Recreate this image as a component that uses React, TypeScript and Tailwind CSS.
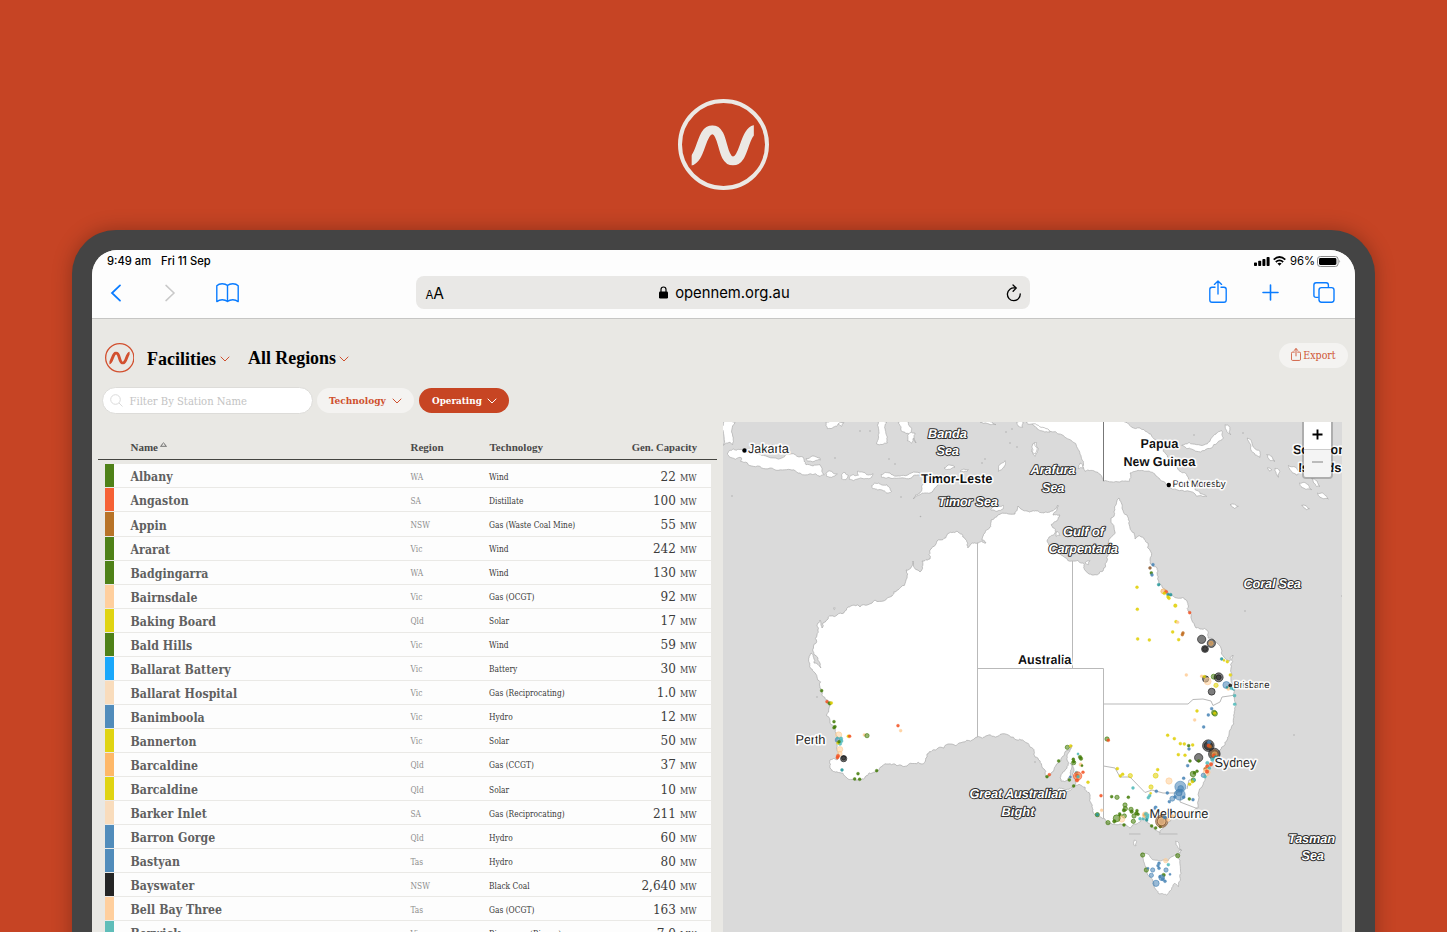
import React from "react";

const SERIF = "font-['DejaVu_Serif_Condensed','DejaVu_Serif',serif]";
const DISPLAY = "font-['Liberation_Serif',serif]";

const COLORS: Record<string, string> = {
  W: "#417a05",
  Y: "#dfcf00",
  B: "#4582b4",
  T: "#1f9497",
  C: "#4cb9b9",
  O: "#f35020",
  P: "#ffcd96",
  G: "#f2aa55",
  K: "#121212",
  N: "#8b572a",
  R: "#c06a1c",
};

type Row = [string, string, string, string, string];

const rows: Row[] = [
  ["Albany", "WA", "Wind", "22", "#4f8118"],
  ["Angaston", "SA", "Distillate", "100", "#f66135"],
  ["Appin", "NSW", "Gas (Waste Coal Mine)", "55", "#b87328"],
  ["Ararat", "Vic", "Wind", "242", "#4f8118"],
  ["Badgingarra", "WA", "Wind", "130", "#4f8118"],
  ["Bairnsdale", "Vic", "Gas (OCGT)", "92", "#ffcf9e"],
  ["Baking Board", "Qld", "Solar", "17", "#e0d413"],
  ["Bald Hills", "Vic", "Wind", "59", "#4f8118"],
  ["Ballarat Battery", "Vic", "Battery", "30", "#1aa8fb"],
  ["Ballarat Hospital", "Vic", "Gas (Reciprocating)", "1.0", "#f9dcbc"],
  ["Banimboola", "Vic", "Hydro", "12", "#518cbb"],
  ["Bannerton", "Vic", "Solar", "50", "#e0d413"],
  ["Barcaldine", "Qld", "Gas (CCGT)", "37", "#feb868"],
  ["Barcaldine", "Qld", "Solar", "10", "#e0d413"],
  ["Barker Inlet", "SA", "Gas (Reciprocating)", "211", "#f9dcbc"],
  ["Barron Gorge", "Qld", "Hydro", "60", "#518cbb"],
  ["Bastyan", "Tas", "Hydro", "80", "#518cbb"],
  ["Bayswater", "NSW", "Black Coal", "2,640", "#252525"],
  ["Bell Bay Three", "Tas", "Gas (OCGT)", "163", "#ffcf9e"],
  ["Berwick", "Vic", "Bioenergy (Biogas)", "7.0", "#5fbdb9"],
];

function Logo({ className }: { className: string }) {
  const clip = React.useId();
  return (
    <svg className={className} viewBox="54 41 273 273" fill="none" stroke="currentColor">
      <clipPath id={clip}>
        <rect x="95" y="120" width="186.5" height="120.5" />
      </clipPath>
      <circle cx="190.5" cy="177.5" r="130.5" strokeWidth="12" />
      <path
        d="M82 230 C128 228 119 133 157 133 C194 133 182 227 219 227 C257 227 248 132 294 130"
        strokeWidth="27"
        clipPath={`url(#${clip})`}
      />
    </svg>
  );
}

function Chevron({ className }: { className: string }) {
  return (
    <svg className={className} viewBox="0 0 10 6" fill="none" stroke="currentColor" strokeWidth="1" strokeLinecap="round">
      <path d="M1 1 L5 5 L9 1" />
    </svg>
  );
}

function ShareIcon({ className, width = 1.5 }: { className: string; width?: number }) {
  return (
    <svg className={className} viewBox="0 0 18 23" fill="none" stroke="currentColor" strokeWidth={width} strokeLinecap="round" strokeLinejoin="round">
      <path d="M6 7.2 H3 Q.8 7.2 .8 9.4 V20 Q.8 22.2 3 22.2 H15 Q17.2 22.2 17.2 20 V9.4 Q17.2 7.2 15 7.2 H12 M9 14 V1 M5.4 4.4 L9 .9 L12.6 4.4" />
    </svg>
  );
}

function StatusBar() {
  return (
    <div className="flex h-[22px] items-center justify-between pl-[15px] pr-[14px] font-['Inter',sans-serif] text-[11.2px] font-medium text-black">
      <div className="flex gap-[10px]">
        <span>9:49 am</span>
        <span>Fri 11 Sep</span>
      </div>
      <div className="flex items-center">
        <svg className="h-[9px] w-[16px]" viewBox="0 0 16 10" preserveAspectRatio="none">
          <rect x="0" y="6" width="3" height="4" rx=".8" />
          <rect x="4.2" y="4.3" width="3" height="5.7" rx=".8" />
          <rect x="8.4" y="2.3" width="3" height="7.7" rx=".8" />
          <rect x="12.6" y="0" width="3" height="10" rx=".8" />
        </svg>
        <svg className="ml-[3px] h-[10px] w-[13px]" viewBox="0 0 13 10" fill="none" stroke="black" strokeWidth="1.7">
          <path d="M.7 3.7 Q6.5 -1.7 12.3 3.7 M2.8 6 Q6.5 2.7 10.2 6" />
          <path d="M4.4 7.5 Q6.5 5.8 8.6 7.5 L6.5 9.7Z" fill="black" stroke="none" />
        </svg>
        <span className="ml-[4px] pt-px text-[11.3px] font-normal">96%</span>
        <svg className="ml-[2px] h-[11px] w-[24px]" viewBox="0 0 24 11">
          <rect x=".5" y=".5" width="20.6" height="10" rx="2.8" fill="none" stroke="#8c8c8c" />
          <rect x="2" y="2" width="17.4" height="7" rx="1.4" />
          <path d="M22.4 3.8 Q24 5.4 22.4 7Z" fill="#8c8c8c" />
        </svg>
      </div>
    </div>
  );
}

function Toolbar() {
  return (
    <div className="flex h-[46px] items-start pt-[4px] text-[#0a7cff]">
      <div className="flex h-[33px] w-[324.4px] items-center pl-[18px]">
        <svg className="h-[18px] w-[12px]" viewBox="0 0 12 18" fill="none" stroke="currentColor" strokeWidth="1.8" strokeLinecap="round">
          <path d="M10 1.4 L2 9 L10 16.6" />
        </svg>
        <svg className="ml-[42px] h-[18px] w-[12px] text-[#c9c9c9]" viewBox="0 0 12 18" fill="none" stroke="currentColor" strokeWidth="1.5" strokeLinecap="round">
          <path d="M2 1.4 L10 9 L2 16.6" />
        </svg>
        <svg className="ml-[40px] h-[20px] w-[23px]" viewBox="0 0 23 20" fill="none" stroke="currentColor" strokeWidth="1.4" strokeLinejoin="round">
          <path d="M11.5 2.5 Q9.7 .8 6.2 .8 Q2.7 .8 .8 2.7 V18.6 Q3.2 16.8 6.2 16.8 Q9.5 16.8 11.5 18.6 Q13.5 16.8 16.8 16.8 Q19.8 16.8 22.2 18.6 V2.7 Q20.3 .8 16.8 .8 Q13.3 .8 11.5 2.5 V18.6" />
        </svg>
      </div>
      <div className="flex h-[33px] w-[614px] items-center justify-between rounded-[8px] bg-[#e9e8e6] pl-[9px] pr-[8px] font-['Inter',sans-serif] text-black">
        <div className="w-[40px] pt-[2px] leading-none">
          <span className="text-[11.5px]">A</span>
          <span className="text-[15.5px]">A</span>
        </div>
        <div className="flex items-center pl-px">
          <svg className="h-[13px] w-[9px]" viewBox="0 0 9 13">
            <rect x="0" y="5.5" width="9" height="7" rx="1.3" />
            <path d="M2 6 V3.6 Q2 1 4.5 1 Q7 1 7 3.6 V6" fill="none" stroke="black" strokeWidth="1.2" />
          </svg>
          <span className="ml-[7px] pt-[2px] text-[14.8px] leading-none">opennem.org.au</span>
        </div>
        <div className="flex w-[40px] justify-end">
          <svg className="h-[18px] w-[16px]" viewBox="0 0 16 18" fill="none" stroke="currentColor" strokeWidth="1.3" strokeLinecap="round">
            <path d="M9 4 A6.4 6.4 0 1 0 14.2 9.8" />
            <path d="M7 1 L10.2 4.1 L7.1 7.2" />
          </svg>
        </div>
      </div>
      <div className="flex h-[33px] flex-1 items-center justify-end pr-[20px]">
        <ShareIcon className="mb-[2px] h-[23px] w-[18px]" width={1.35} />
        <svg className="ml-[35px] h-[17px] w-[17px]" viewBox="0 0 17 17" stroke="currentColor" strokeWidth="1.6" strokeLinecap="round">
          <path d="M8.5 1 V16 M1 8.5 H16" />
        </svg>
        <svg className="ml-[34px] h-[21px] w-[22px]" viewBox="0 0 22 21" fill="none" stroke="currentColor" strokeWidth="1.4">
          <rect x="6" y="5.6" width="15" height="14.6" rx="2.4" />
          <path d="M5.6 15.4 H3.1 Q.9 15.4 .9 13.2 V3 Q.9 .8 3.1 .8 H13.2 Q15.4 .8 15.4 3 V5.2" />
        </svg>
      </div>
    </div>
  );
}

function PageHeader() {
  return (
    <div className={`flex h-[30px] items-center whitespace-nowrap ${DISPLAY}`}>
      <Logo className="ml-[12.5px] h-[29.5px] w-[29.5px] text-[#d2502f]" />
      <span className="ml-[13px] w-[69px] pt-[2px] text-[18px] font-bold leading-none text-black">Facilities</span>
      <Chevron className="ml-[4px] mt-[2px] h-[6px] w-[10px] text-[#cf4f2d]" />
      <span className="ml-[18px] w-[88px] pt-[2px] text-[17.9px] font-bold leading-none text-black">All Regions</span>
      <Chevron className="ml-[3px] mt-[2px] h-[6px] w-[10px] text-[#cf4f2d]" />
      <button className={`mb-[5px] ml-auto mr-[7px] flex h-[25px] w-[69px] items-center justify-center rounded-full bg-[#f4f3f1] text-[10.5px] text-[#cf5535] ${SERIF}`}>
        <ShareIcon className="mb-[2px] mr-[2px] h-[13px] w-[10px]" width={1.6} />
        Export
      </button>
    </div>
  );
}

function Filters() {
  return (
    <div className={`mt-[14px] flex h-[27px] items-center text-[10px] ${SERIF}`}>
      <div className="ml-[9.5px] flex h-[27px] w-[211.5px] items-center rounded-full border border-[#dddcd9] bg-white pl-[7px] text-[11.15px] text-[#c3c3c3]">
        <svg className="mr-[7px] h-[13px] w-[13px]" viewBox="0 0 13 13" fill="none" stroke="#dadada">
          <circle cx="5.5" cy="5.5" r="4.8" />
          <path d="M9 9 L12.5 12.5" />
        </svg>
        <span className="pt-[3px]">Filter By Station Name</span>
      </div>
      <button className="ml-[4px] flex h-[25px] w-[97px] items-center rounded-full bg-[#f4f3f1] pl-[12px] font-bold text-[#cf4f2d]">
        <span className="w-[57px] text-left">Technology</span>
        <Chevron className="ml-[6px] h-[6px] w-[10px]" />
      </button>
      <button className="ml-[5px] flex h-[25px] w-[90px] items-center rounded-full bg-[#c74523] pl-[13px] text-[9.8px] font-bold text-white">
        <span className="w-[50px] pt-[2px] text-left">Operating</span>
        <Chevron className="ml-[5px] h-[6px] w-[10px]" />
      </button>
    </div>
  );
}

function FacilityTable() {
  return (
    <div className="w-[619px]">
      <div className={`flex h-[38px] items-end border-b border-[#444440] pb-[4px] text-[11px] font-bold text-[#4a4a4a] ${DISPLAY}`}>
        <div className="flex w-[312.5px] pl-[32.5px]">
          Name
          <svg className="ml-[2px] mt-[3px] h-[5px] w-[7px]" viewBox="0 0 7 5" fill="none" stroke="#555" strokeWidth=".8">
            <path d="M.5 4.3 Q2 3.5 2.4 1.8 Q3.5 0 4.6 1.8 Q5 3.5 6.5 4.3Z" />
          </svg>
        </div>
        <div className="w-[79px]">Region</div>
        <div className="w-[120px]">Technology</div>
        <div className="flex-1 pr-[20px] text-right text-[10.7px]">Gen. Capacity</div>
      </div>
      <div className={`ml-[6.5px] mr-[6.5px] mt-[4.4px] ${SERIF}`}>
        {rows.map(([name, region, tech, capacity, color], i) => (
          <div key={i} className="flex h-[24.05px] items-center border-b border-[#eae9e6] bg-[#fdfdfd] leading-[18px]">
            <div className="h-full w-[9.5px]" style={{ background: color }} />
            <div className="w-[296.5px] pl-[16.5px] pt-[3px] text-[12.2px] font-bold tracking-[0.06px] text-[#606060]">{name}</div>
            <div className="w-[78.6px] pt-[2px] text-[8.3px] text-[#8d8d8d]">{region}</div>
            <div className="w-[110px] whitespace-nowrap pt-[2px] text-[8.3px] text-[#383838]">{tech}</div>
            <div className="flex flex-1 items-baseline justify-end pr-[14px] pt-[3px] text-[13.4px] text-[#3c3c3c]">
              {capacity}
              <span className="ml-[4px] text-[9px]">MW</span>
            </div>
          </div>
        ))}
      </div>
    </div>
  );
}

/* Coastline vertices, clockwise from the WA / NT border. */
const mainland =
  "977,543 986,543 982,540 985,533 989,528 991,520 998,515 1015,514 1018,506 1027,511 1037,511 1043,513 1052,511 1058,505 1053,515 1060,515 1057,521 1051,525 1055,533 1047,541 1050,548 1060,551 1072,561 1083,563 1085,570 1095,574.7 1103,571 1107,561 1109,548 1111,518 1115,510 1119,498 1122,508 1127,515 1130,528 1135,539 1140,536 1148,543 1150,560 1157,568 1158,580 1163,588 1177,598 1187,601 1188,611 1196,628 1207,630 1208,638 1222,651 1230,661 1233,655 1231,668 1231,680 1235,688 1236,703 1234,717 1230,730 1227,740 1220,750 1215,758 1210,767 1205,778 1202,787 1198,808 1187,812 1172,818 1163,828 1160,833 1155,830 1148,823 1145,817 1140,822 1130,828 1120,824 1108,823 1102,818 1093,812 1091,803 1090,795 1085,787 1079,784 1073,787 1076,780 1073,767 1070,763 1070,773 1068,780 1061,781 1065,770 1067,760 1070,750 1072,745 1065,752 1058,763 1052,772 1046,777 1042,767 1035,757 1030,747 1027,743 1017,740 1000,734.5 987,735.7 977,737 963,742 948,744 938,748 927,754 922,764 907,766 895,764 882,766 875,772 865,777 857,780 847,778 837,772 831,769 830,760 837,760 837,750 836,735 830,723 829,708 827,700 820,688 817,677 810,667 808.5,661 811,653 814,663 821,668 818,658 813.5,648 817,635 817,625 820,620 822,628 827,620 837,615 848,607 860,607 875,600 892,596 898,590 907,578 906,570 913,561 920,572 922,561 930,559 930,550 937,541 947,535 957,531 965,539 968,543 968,548 971,544";

/* Subdivide each edge with a small pseudo-random offset for a natural shoreline. */
function shoreline(points: string, amount: number) {
  let pts = points.split(" ").map((p) => p.split(",").map(Number));
  let seed = 7;
  const rnd = () => {
    seed = (seed * 16807) % 2147483647;
    return seed / 2147483647 - 0.5;
  };
  for (let pass = 0; pass < 3; pass++) {
    const next: number[][] = [];
    pts.forEach((p, i) => {
      const q = pts[(i + 1) % pts.length];
      const dx = q[0] - p[0];
      const dy = q[1] - p[1];
      const k = rnd() * amount;
      next.push(p, [(p[0] + q[0]) / 2 - dy * k, (p[1] + q[1]) / 2 + dx * k]);
    });
    pts = next;
  }
  return "M" + pts.map((p) => p.map((n) => n.toFixed(1)).join(" ")).join("L") + "Z";
}

const islandsNW = [
  "10,12 45,12 40,60 38,80 30,72 10,82", "22,108 40,93 60,94 90,104 130,112 190,118 200,108 250,118 258,140 300,140 313,170 300,175 240,165 200,155 150,150 100,145 62,130 65,120 28,116",
  "258,122 300,120 302,126 262,129", "318,165 335,160 352,168 335,178 320,175", "365,170 375,163 385,172 378,185 365,183", "388,178 400,170 415,172 412,160 440,170 460,168 455,178 430,182 400,188 388,184",
  "483,170 510,165 550,172 600,165 600,172 560,182 510,180 485,178", "455,203 475,195 500,200 515,220 500,225 480,215 458,212", "580,243 600,225 605,205 630,185 670,172 690,175 650,205 630,225 600,230",
  "475,12 500,12 497,40 502,75 470,78 475,50", "535,12 565,12 575,30 572,48 545,40", "565,48 585,45 588,75 580,60 575,75 562,68", "318,12 370,12 350,25 322,32", "890,12 910,12 908,28 895,25", "925,12 990,12 990,42 960,38 945,25",
  "938,78 950,74 955,92 945,115 935,100", "835,160 845,135 855,128 857,138 845,155", "672,150 700,142 705,147 680,155", "720,160 745,155 742,160", "812,275 830,262 850,262 850,272 830,280", "355,18 372,14 365,25", "780,12 815,12 828,20 800,16", "340,570 346,570 343,575",
];
const islandsNE = [
  "-10,12 285,12 330,30 370,60 400,100 430,130 450,160 470,170 485,195 500,200 495,215 530,235 500,235 440,215 400,190 370,165 340,158 300,165 298,190 270,192 220,190 200,162 165,160 160,130 145,95 120,65 60,40 25,22 -10,15",
  "455,82 500,80 540,70 560,45 575,38 580,60 545,90 500,100 470,92", "585,20 600,28 602,50 590,40", "652,60 665,72 690,100 690,118 665,100", "710,110 735,130 720,128", "775,142 810,165 800,172 780,155", "808,195 835,200 845,215 815,208", "862,225 890,235 895,243 870,238", "845,182 870,205 860,205", "6,85 14,75 22,90 16,108 8,104", "735,150 750,160 745,178 738,165", "600,260 625,265 615,272", "815,262 838,272 830,275", "80,340 90,352 78,355", "150,135 160,150 145,152", "165,435 180,428 175,440", "712,150 725,155 720,160",
];
const islandsSE = [
  "335,580 360,590 385,602 415,602 440,583 450,600 453,640 445,680 435,670 425,685 410,705 385,700 372,682 358,650 350,625 340,600",
  "313,540 320,545 318,558 311,555", "437,543 447,550 455,572 443,562", "445,574 455,570 450,580", "78,392 95,385 128,381 122,391 92,398",
];

type Dot = [number, number, number, string];

const dotsSE: Dot[] = [
  [469,45,4,"P"],[515,49,4,"P"],[601,45,4,"Y"],[527,57,9,"K"],[533,64,10,"P"],[523,50,4,"Y"],[551,50,7,"W"],[566,52,13,"K"],[566,52,7,"K"],[558,76,6,"Y"],[589,75,10,"B"],[601,77,5,"K"],[595,86,5,"P"],[591,82,3,"T"],[604,85,4,"C"],[611,87,4,"T"],[545,95,10,"K"],[614,107,4,"C"],[614,133,4,"C"],
  [501,153,4,"Y"],[545,146,4,"B"],[535,165,4,"B"],[552,158,7,"W"],[555,161,7,"W"],[554,160,4,"Y"],[494,180,4,"P"],[521,201,4,"B"],[413,226,4,"Y"],[433,236,4,"Y"],[451,251,4,"Y"],[463,252,4,"Y"],[476,257,4,"W"],[488,255,4,"Y"],[477,267,4,"B"],[445,284,4,"Y"],[465,286,4,"Y"],[480,303,4,"W"],[473,317,4,"B"],
  [535,257,17,"K"],[535,257,12,"K"],[537,247,5,"B"],[536,257,5,"O"],[541,260,4,"R"],[553,282,17,"K"],[553,282,12,"N"],[554,283,7,"G"],[552,287,5,"O"],[557,292,5,"T"],[506,293,12,"K"],[506,303,4,"W"],[547,299,5,"C"],[532,309,5,"C"],[543,313,5,"O"],[532,319,5,"O"],[526,327,5,"R"],[538,325,4,"C"],[530,337,10,"P"],[531,335,5,"O"],[520,346,6,"B"],[525,350,4,"C"],
  [489,342,8,"W"],[501,334,4,"W"],[493,339,4,"W"],[490,360,6,"W"],[492,360,4,"C"],[479,373,4,"Y"],[487,365,4,"Y"],[461,355,4,"B"],[417,363,9,"P"],[451,380,16,"B"],[449,404,16,"B"],[452,385,8,"B"],[447,398,9,"B"],[427,416,7,"B"],[418,425,4,"B"],[412,399,4,"B"],[379,394,4,"B"],[461,412,4,"B"],[435,411,4,"B"],[478,417,4,"W"],[489,419,4,"B"],
  [231,237,6,"W"],[235,241,4,"O"],[383,329,4,"Y"],[377,347,7,"Y"],[301,347,6,"Y"],[262,326,4,"Y"],[271,348,4,"Y"],[278,343,4,"Y"],[363,381,6,"Y"],[362,400,3,"Y"],[359,407,4,"C"],[355,413,4,"C"],[309,384,4,"C"],[295,412,4,"W"],[261,412,6,"W"],[245,410,4,"W"],[213,407,4,"O"],[215,451,4,"P"],[202,464,6,"W"],[202,464,4,"T"],[234,488,6,"W"],
  [285,435,6,"W"],[286,446,6,"W"],[282,451,5,"W"],[303,448,6,"W"],[305,455,5,"W"],[321,452,4,"W"],[319,460,5,"W"],[312,468,6,"W"],[283,468,6,"W"],[269,462,4,"W"],[271,467,4,"W"],[275,477,9,"P"],[260,475,10,"W"],[253,484,5,"W"],[282,495,4,"W"],[310,484,6,"W"],[324,463,4,"W"],[330,476,4,"C"],[340,476,4,"C"],[346,465,9,"P"],[344,465,5,"G"],[348,462,5,"C"],[352,472,5,"C"],[350,480,4,"T"],[357,466,4,"C"],[377,443,5,"B"],[371,448,3,"B"],
  [365,498,4,"W"],[377,504,4,"W"],[391,500,4,"W"],
  [112,262,6,"W"],[122,258,4,"Y"],[86,303,4,"W"],[58,344,4,"O"],[51,350,4,"W"],[130,298,4,"W"],[131,308,6,"W"],[131,305,4,"W"],[150,291,5,"W"],[153,296,5,"W"],[144,282,3,"C"],[152,314,5,"P"],[156,317,3,"W"],[159,337,4,"O"],[139,338,4,"C"],[143,348,12,"O"],[143,348,7,"G"],[141,347,5,"O"],[144,350,4,"C"],[141,361,5,"O"],[118,360,4,"W"],[131,378,4,"W"],[174,367,4,"Y"],[121,351,3,"B"],
  [338,585,6,"W"],[443,587,6,"W"],[407,602,6,"P"],[415,614,4,"C"],[387,610,4,"B"],[384,617,4,"B"],[387,625,4,"B"],[349,630,6,"W"],[354,625,3,"B"],[368,630,6,"B"],[364,646,6,"B"],[408,630,6,"B"],[420,643,3,"B"],[401,645,5,"W"],[395,653,8,"B"],[398,657,5,"B"],[405,664,4,"B"],[390,650,4,"B"],[378,670,9,"B"],
];
/* Latrobe Valley stations sit above the Melbourne label. */
const dotsTop: Dot[] = [
  [395,484,18,"N"],[395,484,13,"N"],[395,484,10,"P"],[415,480,4,"P"],[404,472,5,"B"],[428,468,4,"P"],
];
const dotsNE: Dot[] = [
  [369,440,4,"B"],[360,450,4,"N"],[364,465,4,"W"],[366,471,4,"B"],[386,500,4,"T"],[400,520,7,"G"],[408,522,5,"O"],[403,526,4,"Y"],[414,530,4,"T"],[422,530,4,"T"],[414,537,4,"Y"],[417,541,4,"Y"],[436,563,5,"Y"],[321,508,4,"Y"],[322,574,4,"Y"],[323,663,4,"Y"],[358,666,4,"Y"],[479,584,4,"O"],[438,611,4,"Y"],[443,613,4,"P"],[428,642,4,"Y"],[446,665,4,"Y"],[459,645,4,"R"],[457,650,4,"R"],[515,664,12,"K"],[544,676,12,"K"],[543,676,6,"G"],[525,693,10,"K"],[525,693,7,"K"],[575,723,4,"T"],[582,727,3,"Y"],[592,731,4,"Y"],
];
const dotsSW: Dot[] = [
  [305,92,4,"W"],[321,125,4,"O"],[329,130,5,"W"],[334,129,4,"Y"],[342,185,4,"W"],[345,200,4,"W"],[342,203,4,"W"],[356,225,9,"P"],[353,240,7,"B"],[363,236,5,"C"],[364,243,5,"C"],[360,251,5,"C"],[354,249,4,"Y"],[357,245,4,"W"],[352,234,3,"C"],[360,268,8,"P"],[359,281,7,"P"],[354,288,5,"O"],[352,293,4,"O"],[371,296,9,"K"],[371,294,6,"K"],[366,330,4,"T"],[385,229,4,"Y"],[389,229,4,"O"],[433,225,4,"P"],[441,227,6,"W"],[534,197,4,"O"],[542,212,4,"P"],[470,332,4,"W"],[414,341,4,"W"],[404,357,4,"W"],[419,358,4,"W"],
];

const specks: [number, number][] = [
  [732, 496], [920.5, 516.5], [772, 445], [835, 458], [889, 459], [901, 497], [817, 697], [1342, 596], [1245, 611], [1294, 735], [1035, 762], [895, 464], [870, 431], [860, 431], [1243, 433], [1194, 435], [982, 463], [985, 459], [1012, 429], [1010, 443], [1017, 447], [1006, 432],
];

function Tile({ x, y, children }: { x: number; y: number; children: React.ReactNode }) {
  return <g transform={`translate(${x} ${y}) scale(${1 / 3})`}>{children}</g>;
}

function Dots({ dots }: { dots: Dot[] }) {
  return (
    <>
      {dots.map(([cx, cy, r, c], i) => (
        <circle key={i} cx={cx} cy={cy} r={r + 0.4} fill={COLORS[c]} fillOpacity={r > 5 ? 0.55 : 0.85} stroke={COLORS[c]} strokeOpacity=".7" strokeWidth={r > 5 ? 2.6 : 1.4} />
      ))}
    </>
  );
}

type LabelKind = "country" | "city" | "sea";

const labels: [string, number, number, number, number, LabelKind][] = [
  ["Jakarta", 748, 453, 41, 12.9, "city"],
  ["Port Moresby", 1172.5, 486.5, 53, 9.6, "city"],
  ["Brisbane", 1233.5, 688, 36, 9.6, "city"],
  ["Perth", 795.5, 743.5, 30, 12.9, "city"],
  ["Sydney", 1214.5, 767, 42, 12.9, "city"],
  ["Melbourne", 1149.5, 818, 59, 12.9, "city"],
  ["Timor-Leste", 921, 483.2, 71.5, 12.9, "country"],
  ["Papua", 1140.5, 448.4, 38, 12.9, "country"],
  ["New Guinea", 1123.5, 466.2, 72, 12.9, "country"],
  ["Solomon", 1293, 454.4, 53, 12.9, "country"],
  ["Islands", 1298.5, 472, 43, 12.9, "country"],
  ["Australia", 1018, 664.3, 53.5, 12.9, "country"],
  ["Banda", 928, 437.6, 39, 12.9, "sea"],
  ["Sea", 936.5, 455.4, 22.5, 12.9, "sea"],
  ["Timor Sea", 938, 506.4, 60, 12.9, "sea"],
  ["Arafura", 1030.5, 474.2, 45, 12.9, "sea"],
  ["Sea", 1042, 492, 22.5, 12.9, "sea"],
  ["Gulf of", 1063, 536, 41, 12.9, "sea"],
  ["Carpentaria", 1048.5, 553.4, 69.5, 12.9, "sea"],
  ["Coral Sea", 1243.5, 588, 57.5, 12.9, "sea"],
  ["Great Australian", 969.5, 798.4, 96.5, 12.9, "sea"],
  ["Bight", 1001.5, 816.2, 33, 12.9, "sea"],
  ["Tasman", 1288, 842.7, 47, 12.9, "sea"],
  ["Sea", 1301.5, 860, 22.5, 12.9, "sea"],
];

function MapPanel() {
  return (
    <div className="relative ml-[6px] h-[510px] w-[619px] overflow-hidden bg-[#dadada]">
      <svg className="block h-[510px] w-[619px] font-['Liberation_Sans',sans-serif] [text-rendering:geometricPrecision]" viewBox="723 422 619 510">
        <g fill="#fff" stroke="#a9a9a9" strokeWidth=".7" strokeLinejoin="round">
          <path d={shoreline(mainland, 0.42)} />
          <Tile x={720} y={418}>
            {islandsNW.map((p, i) => <path key={i} d={shoreline(p, 0.35)} strokeWidth="2" />)}
          </Tile>
          <Tile x={1030} y={418}>
            {islandsNE.map((p, i) => <path key={i} d={shoreline(p, 0.35)} strokeWidth="2" />)}
          </Tile>
          <Tile x={1030} y={660}>
            {islandsSE.map((p, i) => <path key={i} d={shoreline(p, 0.35)} strokeWidth="2" />)}
          </Tile>
        </g>
        <g fill="none" stroke="#b9b9b9" strokeWidth="1">
          <path d="M977.5 543 V737 M977.5 668.5 H1103.5 M1072.5 561 V668.5 M1103.5 668.5 V818 M1103.5 704 H1188 L1193 699.5 L1203 699 L1211 701 L1213 705.5 L1220 702 L1222 697 L1236 695" />
          <path d="M1103.5 766 L1115 768 L1120 777 L1130 777 L1145 792.5 L1152 790 L1163 793 L1177 793 L1182 789 L1180 802 L1197 808.5 M1187 789 L1189 780 L1194 780" />
          <path d="M1129 834 H1140.5 M1159 834 H1177.5" />
        </g>
        <path d="M1103.5 422 V481" stroke="#777" strokeWidth="1" />
        {specks.map(([x, y], i) => <circle key={i} cx={x} cy={y} r=".8" fill="#b0b0b0" />)}
        <Tile x={720} y={660}><Dots dots={dotsSW} /></Tile>
        <Tile x={1030} y={418}><Dots dots={dotsNE} /></Tile>
        <Tile x={1030} y={660}><Dots dots={dotsSE} /></Tile>
        <circle cx="744.5" cy="450.5" r="2.2" />
        <circle cx="1168.8" cy="485" r="2.2" />
        {labels.map(([text, x, y, w, size, kind], i) => (
          <text
            key={i}
            x={x}
            y={y}
            textLength={w}
            fontSize={size}
            fontWeight={kind === "city" ? 400 : 700}
            fontStyle={kind === "sea" ? "italic" : "normal"}
            fill={kind === "sea" ? "#fff" : kind === "city" ? "#222" : "#111"}
            stroke={kind === "sea" ? "#2d2d2d" : "#fff"}
            strokeOpacity={kind === "sea" ? 1 : 0.9}
            strokeWidth={kind === "sea" ? 2 : 3.2}
            strokeLinejoin="round"
            paintOrder="stroke"
          >
            {text}
          </text>
        ))}
        <Tile x={1030} y={660}><Dots dots={dotsTop} /></Tile>
      </svg>
      <div className="absolute -top-[4px] right-[9px] flex h-[61px] w-[31px] flex-col rounded-[4px] border-2 border-black/20 bg-clip-padding text-black">
        <div className="flex h-[30px] items-center justify-center border-b border-[#cccccc] bg-white">
          <svg className="h-[11px] w-[11px]" viewBox="0 0 11 11" stroke="black" strokeWidth="1.9">
            <path d="M5.5 .5 V10.5 M.5 5.5 H10.5" />
          </svg>
        </div>
        <div className="flex flex-1 items-center justify-center rounded-b-[2px] bg-[#f4f4f4] pb-[4px]">
          <div className="h-[2px] w-[11px] bg-[#bbbbbb]" />
        </div>
      </div>
    </div>
  );
}

export default function App() {
  return (
    <div className="flex h-[932px] w-[1447px] flex-col items-center overflow-hidden bg-[#c64424]">
      <Logo className="mt-[99px] h-[91px] w-[91px] shrink-0 text-[#ebe8e4]" />
      <div className="mt-[40px] h-[760px] w-[1303px] shrink-0 rounded-t-[44px] bg-[#444444] px-[20px] pt-[20px] shadow-[0_0_20px_rgba(0,0,0,0.28)]">
        <div className="h-[740px] overflow-hidden rounded-t-[25px] bg-[#e9e8e4]">
          <div className="h-[69px] border-b border-[#c6c6c4] bg-[#fdfdfd]">
            <StatusBar />
            <Toolbar />
          </div>
          <div className="pt-[24px]">
            <PageHeader />
            <Filters />
            <div className="mt-[8px] flex pl-[6px]">
              <FacilityTable />
              <MapPanel />
            </div>
          </div>
        </div>
      </div>
    </div>
  );
}
